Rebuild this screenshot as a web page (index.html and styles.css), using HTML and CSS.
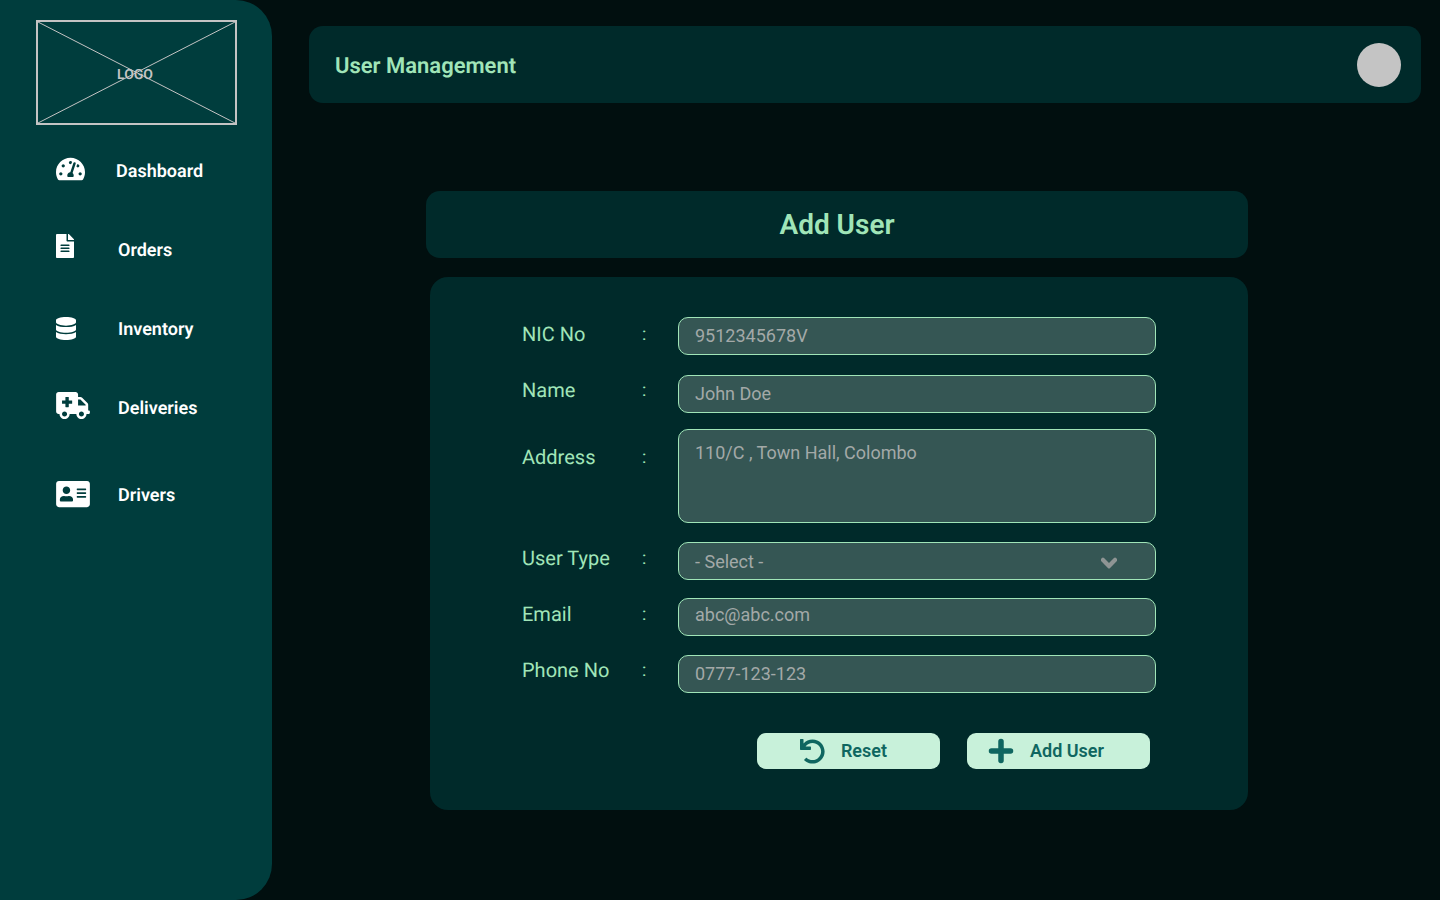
FILE: index.html
```html
<!DOCTYPE html>
<html>
<head>
  <title>User Management</title>
  <meta charset="utf-8" />
  <link rel="stylesheet" href="styles.css">
</head>
<body>

<!--Sidebar-->
<aside class="sidebar">
  <div class="logo">
    <svg class="logo-cross" viewBox="0 0 197 101" preserveAspectRatio="none"><path d="M0 0L197 101M197 0L0 101"/></svg>
    <span class="logo-text">LOGO</span>
  </div>
  <nav class="nav">
    <a class="nav-item nav-dashboard" href="#">
      <span class="nav-icon"><svg width="29" height="26" viewBox="0 0 576 512"><path d="M288 32C128.94 32 0 160.94 0 320c0 52.8 14.25 102.26 39.06 144.8 5.61 9.62 16.3 15.2 27.44 15.2h443c11.14 0 21.83-5.58 27.44-15.2C561.75 422.26 576 372.8 576 320c0-159.06-128.94-288-288-288zm0 64c14.71 0 26.58 10.13 30.32 23.65-1.11 2.26-2.64 4.23-3.45 6.67l-9.22 27.67c-5.13 3.49-10.97 6.01-17.64 6.01-17.67 0-32-14.33-32-32S270.33 96 288 96zM96 384c-17.67 0-32-14.33-32-32s14.33-32 32-32 32 14.33 32 32-14.33 32-32 32zm48-160c-17.67 0-32-14.33-32-32s14.33-32 32-32 32 14.33 32 32-14.33 32-32 32zm246.77-72.41l-61.33 184C343.13 347.33 352 364.54 352 384c0 11.72-3.38 22.55-8.88 32H232.88c-5.5-9.45-8.88-20.28-8.88-32 0-33.94 26.5-61.43 59.9-63.59l61.34-184.01c4.17-12.56 17.73-19.45 30.36-15.17 12.57 4.19 19.35 17.79 15.17 30.36zm14.66 57.2l15.52-46.55c3.47-1.29 7.13-2.23 11.05-2.23 17.67 0 32 14.33 32 32s-14.33 32-32 32c-11.38-.01-20.89-6.28-26.57-15.22zM480 384c-17.67 0-32-14.33-32-32s14.33-32 32-32 32 14.33 32 32-14.33 32-32 32z"/></svg></span>
      Dashboard
    </a>
    <a class="nav-item nav-orders" href="#">
      <span class="nav-icon"><svg width="18" height="24" viewBox="0 0 384 512"><path d="M224 136V0H24C10.7 0 0 10.7 0 24v464c0 13.3 10.7 24 24 24h336c13.3 0 24-10.7 24-24V160H248c-13.2 0-24-10.8-24-24zm64 236c0 6.6-5.4 12-12 12H108c-6.6 0-12-5.4-12-12v-8c0-6.6 5.4-12 12-12h168c6.6 0 12 5.4 12 12v8zm0-64c0 6.6-5.4 12-12 12H108c-6.6 0-12-5.4-12-12v-8c0-6.6 5.4-12 12-12h168c6.6 0 12 5.4 12 12v8zm0-72v8c0 6.6-5.4 12-12 12H108c-6.6 0-12-5.4-12-12v-8c0-6.6 5.4-12 12-12h168c6.6 0 12 5.4 12 12zm96-114.1v6.1H256V0h6.1c6.4 0 12.5 2.5 17 7l97.9 98c4.5 4.5 7 10.6 7 16.9z"/></svg></span>
      Orders
    </a>
    <a class="nav-item nav-inventory" href="#">
      <span class="nav-icon"><svg width="20" height="23" viewBox="0 0 448 512" preserveAspectRatio="none"><path d="M448 73.143v45.714C448 159.143 347.667 192 224 192S0 159.143 0 118.857V73.143C0 32.857 100.333 0 224 0s224 32.857 224 73.143zM448 176v102.857C448 319.143 347.667 352 224 352S0 319.143 0 278.857V176c48.125 33.143 136.208 48.572 224 48.572S399.874 209.143 448 176zm0 160v102.857C448 479.143 347.667 512 224 512S0 479.143 0 438.857V336c48.125 33.143 136.208 48.572 224 48.572S399.874 369.143 448 336z"/></svg></span>
      Inventory
    </a>
    <a class="nav-item nav-deliveries" href="#">
      <span class="nav-icon"><svg width="34" height="27" viewBox="0 0 640 512"><path d="M624 352h-16V243.9c0-12.7-5.1-24.9-14.1-33.9L494 110.1c-9-9-21.2-14.1-33.9-14.1H416V48c0-26.5-21.5-48-48-48H48C21.5 0 0 21.5 0 48v320c0 26.5 21.5 48 48 48h16c0 53 43 96 96 96s96-43 96-96h128c0 53 43 96 96 96s96-43 96-96h48c8.8 0 16-7.2 16-16v-32c0-8.8-7.2-16-16-16zM160 464c-26.5 0-48-21.5-48-48s21.5-48 48-48 48 21.5 48 48-21.5 48-48 48zm144-248c0 4.4-3.6 8-8 8h-56v56c0 4.4-3.6 8-8 8h-48c-4.4 0-8-3.6-8-8v-56h-56c-4.4 0-8-3.6-8-8v-48c0-4.4 3.6-8 8-8h56v-56c0-4.4 3.6-8 8-8h48c4.4 0 8 3.6 8 8v56h56c4.4 0 8 3.6 8 8v48zm176 248c-26.5 0-48-21.5-48-48s21.5-48 48-48 48 21.5 48 48-21.5 48-48 48zm80-208H416V144h44.1l99.9 99.9V256z"/></svg></span>
      Deliveries
    </a>
    <a class="nav-item nav-drivers" href="#">
      <span class="nav-icon"><svg width="34" height="30" viewBox="0 0 576 512"><path d="M528 32H48C21.5 32 0 53.5 0 80v352c0 26.5 21.5 48 48 48h480c26.5 0 48-21.5 48-48V80c0-26.5-21.5-48-48-48zm-352 96c35.3 0 64 28.7 64 64s-28.7 64-64 64-64-28.7-64-64 28.7-64 64-64zm112 236.8c0 10.6-10 19.2-22.4 19.2H86.4C74 384 64 375.4 64 364.8v-19.2c0-31.8 30.1-57.6 67.2-57.6h5c12.3 5.1 25.7 8 39.8 8s27.6-2.9 39.8-8h5c37.1 0 67.2 25.8 67.2 57.6v19.2zM512 312c0 4.4-3.6 8-8 8H360c-4.4 0-8-3.6-8-8v-16c0-4.4 3.6-8 8-8h144c4.4 0 8 3.6 8 8v16zm0-64c0 4.4-3.6 8-8 8H360c-4.4 0-8-3.6-8-8v-16c0-4.4 3.6-8 8-8h144c4.4 0 8 3.6 8 8v16zm0-64c0 4.4-3.6 8-8 8H360c-4.4 0-8-3.6-8-8v-16c0-4.4 3.6-8 8-8h144c4.4 0 8 3.6 8 8v16z"/></svg></span>
      Drivers
    </a>
  </nav>
</aside>

<!--Main section-->
<main class="main">
  <header class="topbar">
    <h1 class="page-title">User Management</h1>
    <div class="avatar"></div>
  </header>

  <h2 class="form-title">Add User</h2>

  <form class="form-panel">
    <div class="row row-nic">
      <label class="label">NIC No</label><span class="colon">:</span>
      <input class="field" type="text" placeholder="9512345678V">
    </div>
    <div class="row row-name">
      <label class="label">Name</label><span class="colon">:</span>
      <input class="field" type="text" placeholder="John Doe">
    </div>
    <div class="row row-address">
      <label class="label">Address</label><span class="colon">:</span>
      <textarea class="field field-area" placeholder="110/C , Town Hall, Colombo"></textarea>
    </div>
    <div class="row row-type">
      <label class="label">User Type</label><span class="colon">:</span>
      <div class="select-wrap">
        <select class="field field-select"><option>- Select -</option></select>
        <svg class="select-arrow" width="16" height="18" viewBox="0 0 448 512"><path d="M207.029 381.476L12.436 186.883c-9.373-9.373-9.373-24.569 0-33.941l22.667-22.667c9.357-9.357 24.522-9.375 33.901-.04L224 284.505l154.745-154.021c9.379-9.335 24.544-9.317 33.901.04l22.667 22.667c9.373 9.373 9.373 24.569 0 33.941L240.971 381.476c-9.373 9.372-24.569 9.372-33.942 0z"/></svg>
      </div>
    </div>
    <div class="row row-email">
      <label class="label">Email</label><span class="colon">:</span>
      <input class="field field-email" type="text" placeholder="abc@abc.com">
    </div>
    <div class="row row-phone">
      <label class="label">Phone No</label><span class="colon">:</span>
      <input class="field" type="text" placeholder="0777-123-123">
    </div>

    <div class="buttons">
      <button class="btn btn-reset" type="button">
        <svg width="25" height="25" viewBox="0 0 512 512"><path d="M212.333 224.333H12c-6.627 0-12-5.373-12-12V12C0 5.373 5.373 0 12 0h48c6.627 0 12 5.373 12 12v78.112C117.773 39.279 184.26 7.47 258.175 8.007c136.906.994 246.448 111.623 246.157 248.532C504.041 393.258 393.12 504 256.333 504c-64.089 0-122.496-24.313-166.51-64.215-5.099-4.622-5.334-12.554-.467-17.42l33.967-33.967c4.474-4.474 11.662-4.717 16.401-.525C170.76 415.336 211.58 432 256.333 432c97.268 0 176-78.716 176-176 0-97.267-78.716-176-176-176-58.496 0-110.28 28.476-142.274 72.333h98.274c6.627 0 12 5.373 12 12v48c0 6.627-5.373 12-12 12z"/></svg>
        Reset
      </button>
      <button class="btn btn-add" type="button">
        <svg width="26" height="26" viewBox="0 0 26 26"><path class="plus" d="M13 3.500V22.500M3.500 13H22.500"/></svg>
        Add User
      </button>
    </div>
  </form>
</main>

</body>
</html>
```

FILE: styles.css
```css
* {
  box-sizing: border-box;
}

body {
  margin: 0;
  height: 900px;
  overflow: hidden;
  display: flex;
  background: #010f0f;
  font-family: 'Roboto', 'Liberation Sans', sans-serif;
  text-rendering: geometricPrecision;
}

h1, h2 {
  margin: 0;
  font-weight: 600;
  color: #a0e5b8;
}

/* sidebar */
.sidebar {
  width: 272px;
  height: 900px;
  padding: 20px 0 0 36px;
  flex-shrink: 0;
  background: #003d3d;
  border-radius: 0 36px 36px 0;
}

.logo {
  position: relative;
  width: 201px;
  height: 105px;
  display: flex;
  align-items: center;
  justify-content: center;
  border: 2px solid #c4c4c4;
}

.logo-cross {
  position: absolute;
  top: 0;
  left: 0;
  width: 100%;
  height: 100%;
}

.logo-cross path {
  fill: none;
  stroke: #c4c4c4;
  stroke-width: 1;
}

.logo-text {
  position: relative;
  left: -1.500px;
  top: 2px;
  font-size: 14px;
  font-weight: 600;
  color: #c4c4c4;
}

.nav {
  display: flex;
  flex-direction: column;
  gap: 39px;
  margin-top: 25px;
  padding-left: 20px;
}

.nav-item {
  display: flex;
  align-items: center;
  height: 40px;
  padding-top: 2px;
  font-size: 18px;
  font-weight: 600;
  color: #fff;
  text-decoration: none;
}

.nav-icon {
  width: 62px;
  display: flex;
  align-items: center;
  flex-shrink: 0;
}

.nav-icon svg {
  fill: #fff;
  display: block;
}

.nav-dashboard .nav-icon {
  width: 60px;
  margin-bottom: 5px;
}

.nav-orders .nav-icon {
  margin-bottom: 8px;
}

.nav-inventory .nav-icon {
  margin-bottom: 2px;
}

.nav-deliveries .nav-icon {
  margin-bottom: 6px;
}

.nav-drivers {
  margin-top: 8px;
}

.nav-drivers .nav-icon {
  margin-bottom: 2px;
}

/* main */
.main {
  flex: 1;
  padding: 26px 19px 0 37px;
}

.topbar {
  height: 77px;
  padding: 0 20px 0 26px;
  display: flex;
  align-items: center;
  justify-content: space-between;
  background: #002a2a;
  border-radius: 14px;
}

.page-title {
  font-size: 22px;
  padding-top: 4px;
}

.avatar {
  width: 44px;
  height: 44px;
  border-radius: 50%;
  background: #c4c4c4;
}

.form-title {
  width: 822px;
  height: 67px;
  margin: 88px 0 0 117px;
  display: flex;
  align-items: center;
  justify-content: center;
  font-size: 28px;
  background: #002a2a;
  border-radius: 14px;
}

.form-panel {
  width: 818px;
  height: 533px;
  margin: 19px 0 0 121px;
  padding: 40px 0 0 92px;
  background: #002a2a;
  border-radius: 18px;
}

/* form rows */
.row {
  display: grid;
  grid-template-columns: 120px 36px 478px;
  align-items: start;
  font-size: 20px;
  line-height: 23px;
  color: #a0e5b8;
}

.label {
  padding-top: 5px;
}

.colon {
  padding-top: 5px;
  font-size: 18px;
}

.row-name { margin-top: 20px; }
.row-address { margin-top: 16px; }
.row-type { margin-top: 19px; }
.row-email { margin-top: 18px; }
.row-phone { margin-top: 19px; }

.row-nic .label,
.row-nic .colon { padding-top: 6px; }

.row-name .label,
.row-name .colon,
.row-phone .label,
.row-phone .colon { padding-top: 4px; }

.row-address .label,
.row-address .colon { padding-top: 17px; }

.field {
  display: block;
  width: 100%;
  height: 38px;
  padding: 0 16px 2px;
  font-family: inherit;
  font-size: 18px;
  color: #a3a9a8;
  background: #355654;
  border: 1px solid #a0e5b8;
  border-radius: 10px;
  outline: none;
  resize: none;
}

.field::placeholder {
  color: #a3a9a8;
  opacity: 1;
}

.field-email {
  padding-bottom: 6px;
}

.field-area {
  height: 94px;
  padding-top: 12px;
  line-height: 21px;
}

.field-select {
  appearance: none;
  -webkit-appearance: none;
  padding-bottom: 0;
}

.select-wrap {
  position: relative;
}

.select-arrow {
  position: absolute;
  top: 12px;
  right: 39px;
  fill: #8f9594;
  stroke: #8f9594;
  stroke-width: 40;
}

/* buttons */
.buttons {
  display: flex;
  gap: 27px;
  margin-top: 40px;
  padding-left: 235px;
}

.btn {
  width: 183px;
  height: 36px;
  padding: 0 0 2px;
  display: flex;
  align-items: center;
  justify-content: center;
  font-family: inherit;
  font-size: 18px;
  font-weight: 600;
  color: #0f6660;
  background: #c8f1da;
  border: none;
  border-radius: 9px;
}

.btn svg {
  fill: #0f6660;
  flex-shrink: 0;
  margin-top: 2px;
}

.btn-reset {
  padding-right: 10px;
}

.btn-reset svg {
  margin-right: 16px;
}

.btn-add {
  padding-right: 25px;
}

.btn-add svg {
  margin-right: 16px;
}

.plus {
  fill: none;
  stroke: #0f6660;
  stroke-width: 5.5;
  stroke-linecap: round;
}
```
